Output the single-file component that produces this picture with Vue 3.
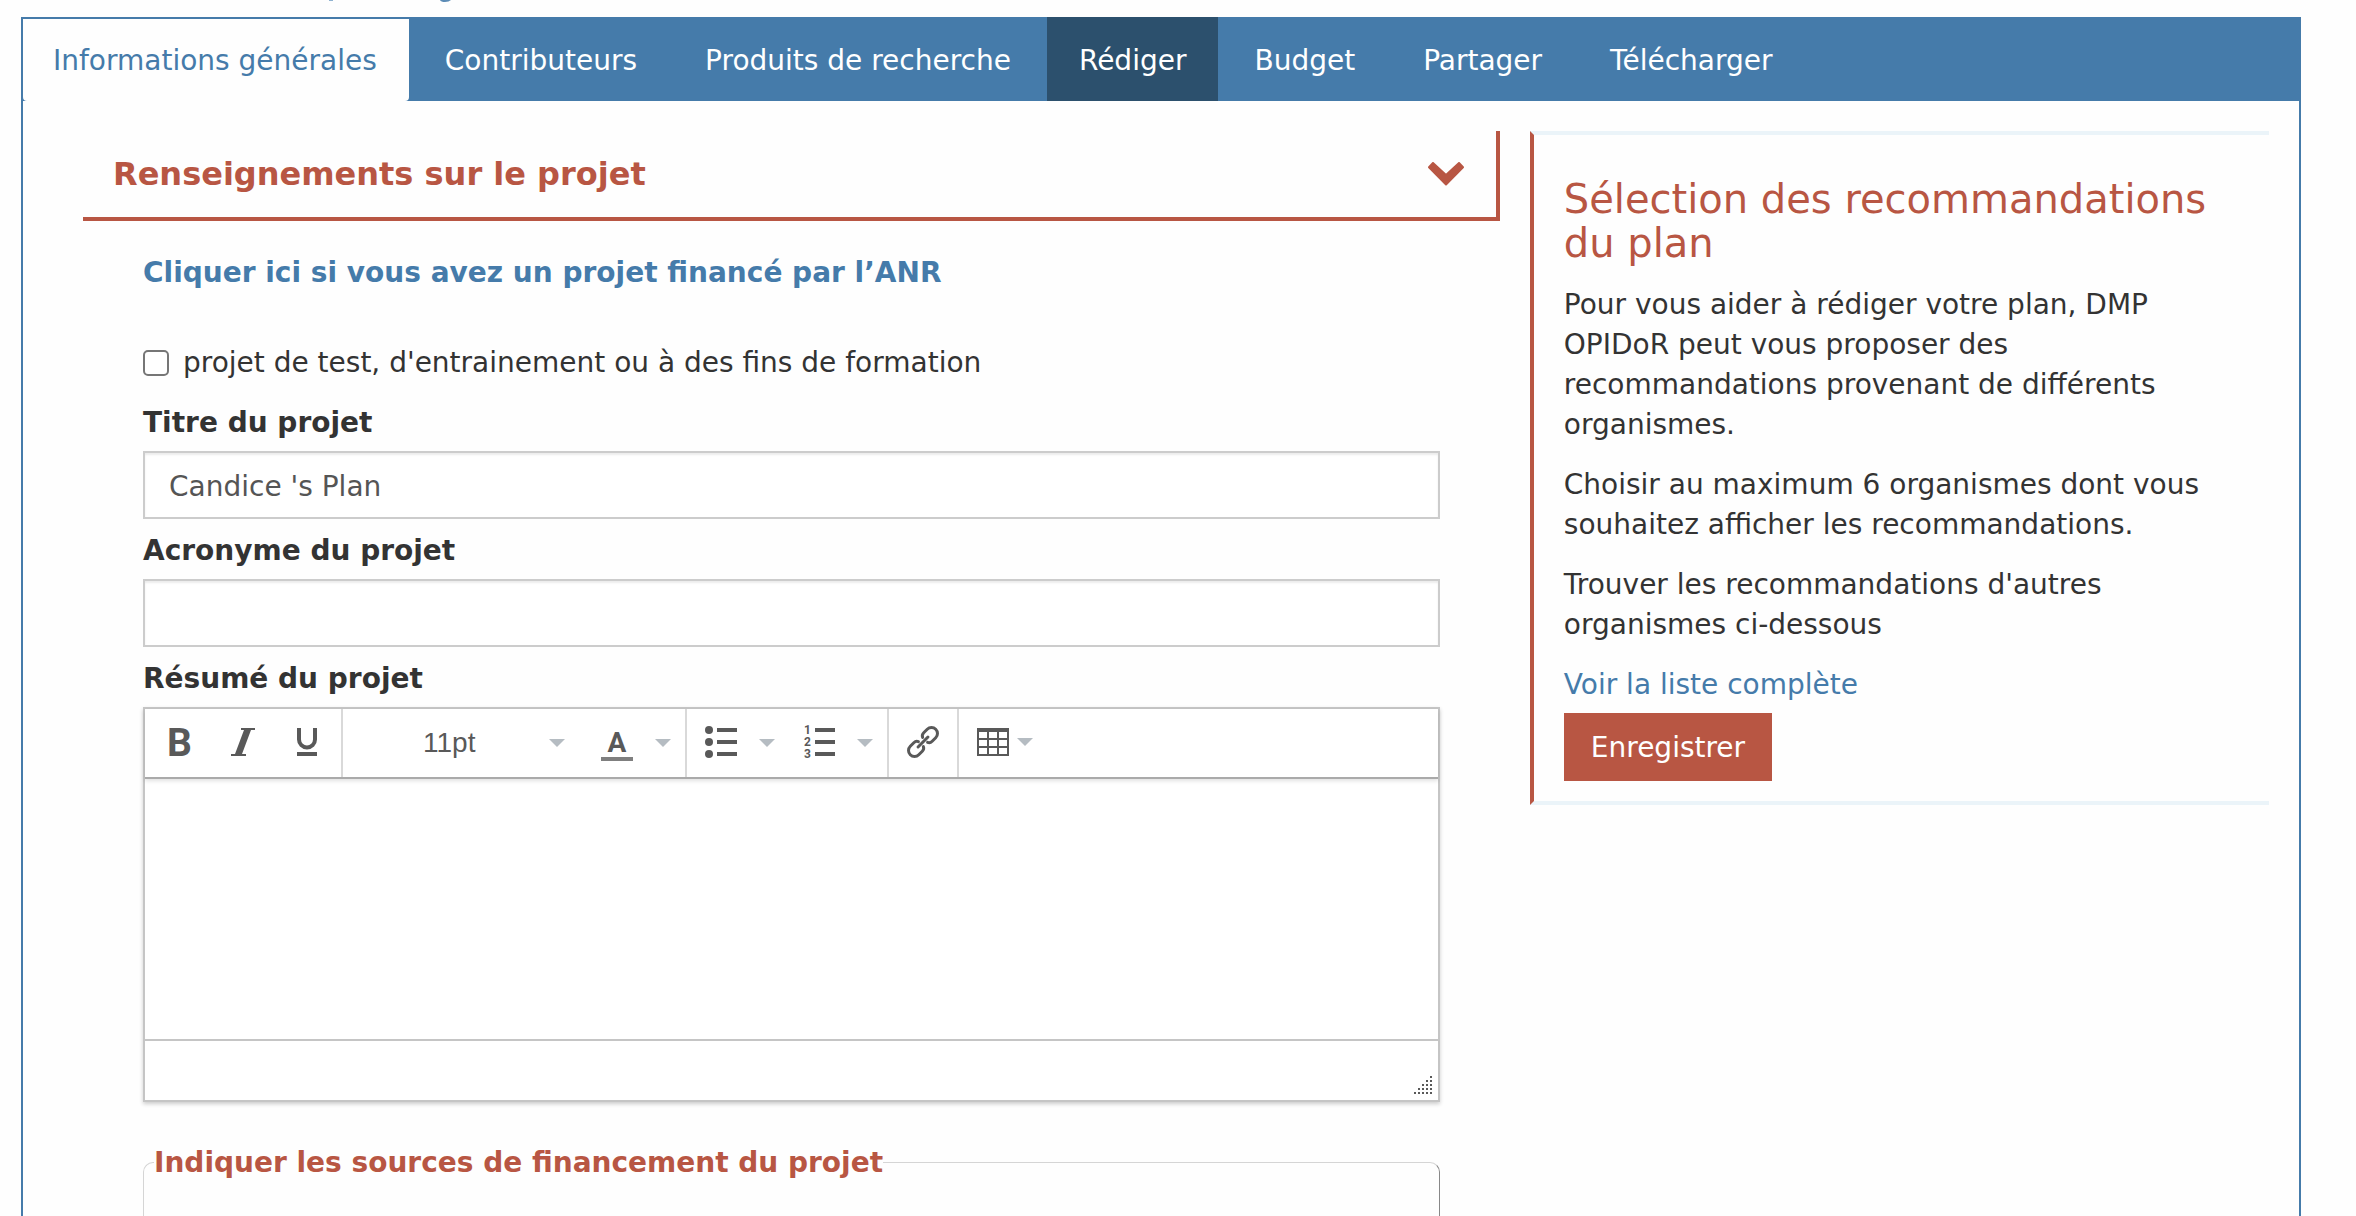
<script setup>
import { ref } from 'vue'

const tabs = [
  { label: 'Informations générales', state: 'active' },
  { label: 'Contributeurs' },
  { label: 'Produits de recherche' },
  { label: 'Rédiger', state: 'hover' },
  { label: 'Budget' },
  { label: 'Partager' },
  { label: 'Télécharger' },
]

const title = ref("Candice 's Plan")
const acronym = ref('')
const summary = ref('')
const isTest = ref(false)
const fontSize = ref('11pt')

// Resize grip: a triangle of dots, five columns wide
const gripDots = []
for (let row = 0; row < 5; row++) {
  for (let col = 4 - row; col < 5; col++) gripDots.push({ x: col * 4, y: row * 4 })
}
</script>

<template>
  <div class="page">
    <header class="title-strip">
      <svg width="460" height="3" viewBox="0 0 460 3" aria-hidden="true">
        <rect x="329" width="4" height="1" fill="#8fb2d0" />
        <path d="M440 0h11q-2 2-6 2t-5-2z" fill="#5c8cb6" />
      </svg>
    </header>

    <nav class="tabs">
      <a v-for="tab in tabs" :key="tab.label" href="#" class="tab" :class="tab.state">{{ tab.label }}</a>
    </nav>

    <main class="panel">
      <section class="project">
        <button type="button" class="section-head">
          <span>Renseignements sur le projet</span>
          <svg width="36" height="24" viewBox="0 0 36 24" aria-hidden="true">
            <path d="M5 1 1 5.300 18 22.500 35 5.300 31 1 18 13z" fill="#b85643" stroke="#b85643" stroke-width="2" stroke-linejoin="round" />
          </svg>
        </button>

        <form class="form" @submit.prevent>
          <a href="#" class="anr-link">Cliquer ici si vous avez un projet financé par l’ANR</a>

          <label class="check">
            <input v-model="isTest" type="checkbox" />
            <span>projet de test, d'entrainement ou à des fins de formation</span>
          </label>

          <label class="field-label" for="title">Titre du projet</label>
          <input id="title" v-model="title" class="text-input" type="text" />

          <label class="field-label" for="acronym">Acronyme du projet</label>
          <input id="acronym" v-model="acronym" class="text-input" type="text" />

          <label class="field-label" for="summary">Résumé du projet</label>
          <div class="editor">
            <div class="toolbar">
              <div class="group">
                <button type="button" class="tool" aria-label="Gras">
                  <svg class="icon" viewBox="0 0 32 32"><text x="4" y="30" font-size="39" font-weight="700">B</text></svg>
                </button>
                <button type="button" class="tool" aria-label="Italique">
                  <svg class="icon" viewBox="0 0 32 32"><path d="M14 2h14v2h-4L15 28h4v2H4v-2h4l9-24h-3z" /></svg>
                </button>
                <button type="button" class="tool" aria-label="Souligné">
                  <svg class="icon" viewBox="0 0 32 32">
                    <path d="M8 2v11.500a8 8 0 0 0 16 0V2" fill="none" stroke="#595959" stroke-width="4" />
                    <path d="M6 26h20v4H6z" />
                  </svg>
                </button>
              </div>
              <div class="group">
                <div class="size-picker">
                  <select v-model="fontSize" aria-label="Taille de police">
                    <option>11pt</option>
                    <option>12pt</option>
                    <option>14pt</option>
                  </select>
                  <svg class="caret" viewBox="0 0 16 8" aria-hidden="true"><path d="M0 0h16L8 8z" /></svg>
                </div>
                <button type="button" class="tool" aria-label="Couleur du texte">
                  <svg class="icon" viewBox="0 0 32 32">
                    <text x="16" y="26" font-size="28" font-weight="700" text-anchor="middle">A</text>
                    <path d="M0 31h32v4H0z" fill="#7f7f7f" />
                  </svg>
                </button>
                <button type="button" class="tool-more" aria-label="Choisir une couleur">
                  <svg class="caret" viewBox="0 0 16 8"><path d="M0 0h16L8 8z" /></svg>
                </button>
              </div>
              <div class="group">
                <button type="button" class="tool" aria-label="Liste à puces">
                  <svg class="icon" viewBox="0 0 32 32">
                    <circle cx="4" cy="4" r="4" /><circle cx="4" cy="16" r="4" /><circle cx="4" cy="28" r="4" />
                    <path d="M12 2h20v4H12zM12 14h20v4H12zM12 26h20v4H12z" />
                  </svg>
                </button>
                <button type="button" class="tool-more" aria-label="Style de puces">
                  <svg class="caret" viewBox="0 0 16 8"><path d="M0 0h16L8 8z" /></svg>
                </button>
                <button type="button" class="tool" aria-label="Liste numérotée">
                  <svg class="icon" viewBox="0 0 32 32">
                    <g font-size="12" font-weight="700">
                      <text x="1" y="8">1</text><text x="1" y="20">2</text><text x="1" y="32">3</text>
                    </g>
                    <path d="M12 2h20v4H12zM12 14h20v4H12zM12 26h20v4H12z" />
                  </svg>
                </button>
                <button type="button" class="tool-more" aria-label="Style de numérotation">
                  <svg class="caret" viewBox="0 0 16 8"><path d="M0 0h16L8 8z" /></svg>
                </button>
              </div>
              <div class="group">
                <button type="button" class="tool" aria-label="Lien">
                  <svg class="icon" viewBox="0 0 32 32">
                    <g transform="translate(16 16) rotate(-45)" fill="none" stroke="#595959" stroke-width="3" stroke-linecap="round">
                      <path d="M3 -3.500Q4 -6 7 -6H12a6 6 0 0 1 0 12H7Q4 6 3 3.500" />
                      <path d="M-3 -3.500Q-4 -6 -7 -6H-12a6 6 0 0 0 0 12H-7Q-4 6 -3 3.500" />
                      <path d="M-7 0H7" />
                    </g>
                  </svg>
                </button>
              </div>
              <div class="group last">
                <button type="button" class="tool-menu" aria-label="Tableau">
                  <svg class="icon" viewBox="0 0 32 32">
                    <path fill-rule="evenodd" d="M0 2h32v28H0zM2 6v6h8V6zM12 6v6h8V6zM22 6v6h8V6zM2 14v6h8v-6zM12 14v6h8v-6zM22 14v6h8v-6zM2 22v6h8v-6zM12 22v6h8v-6zM22 22v6h8v-6z" />
                  </svg>
                  <svg class="caret" viewBox="0 0 16 8"><path d="M0 0h16L8 8z" /></svg>
                </button>
              </div>
            </div>
            <textarea id="summary" v-model="summary" class="edit-area"></textarea>
            <div class="statusbar">
              <svg width="18" height="18" viewBox="0 0 18 18" aria-hidden="true">
                <rect v-for="(dot, i) in gripDots" :key="i" :x="dot.x" :y="dot.y" width="2" height="2" fill="#595959" />
              </svg>
            </div>
          </div>

          <fieldset class="funding">
            <legend>Indiquer les sources de financement du projet</legend>
          </fieldset>
        </form>
      </section>

      <aside class="guidance">
        <h2>Sélection des recommandations du plan</h2>
        <p>Pour vous aider à rédiger votre plan, DMP OPIDoR peut vous proposer des recommandations provenant de différents organismes.</p>
        <p>Choisir au maximum 6 organismes dont vous souhaitez afficher les recommandations.</p>
        <p>Trouver les recommandations d'autres organismes ci-dessous</p>
        <a href="#" class="full-list">Voir la liste complète</a>
        <button type="button" class="save">Enregistrer</button>
      </aside>
    </main>
  </div>
</template>

<style>
body {
  margin: 0;
  background: #fefefe;
}
</style>

<style scoped>
.page {
  --blue: #457baa;
  --red: #b85643;
  display: flex;
  flex-direction: column;
  box-sizing: border-box;
  height: 100vh;
  overflow: hidden;
  padding: 0 55px 0 21px;
  font-family: Verdana, 'DejaVu Sans', sans-serif;
  font-size: 28px;
  line-height: 40px;
  color: #333;
}

.page *,
.page *::before {
  box-sizing: border-box;
}

button,
input,
select,
textarea {
  margin: 0;
  font: inherit;
  color: inherit;
}

button {
  border: 0;
  background: none;
  cursor: pointer;
}

svg {
  display: block;
  flex: none;
}

a {
  color: var(--blue);
  text-decoration: none;
}

.title-strip {
  flex: none;
  height: 17px;
  margin-left: -21px;
}

.tabs {
  display: flex;
  flex: none;
  gap: 4px;
  padding: 0 2px;
  background: var(--blue);
}

.tab {
  padding: 24px 32px 20px;
  color: #fff;
  white-space: nowrap;
}

.tab.active {
  padding-top: 22px;
  padding-left: 30px;
  border-top: 2px solid var(--blue);
  border-radius: 0 0 4px 4px;
  background: #fefefe;
  color: var(--blue);
}

.tab.hover {
  background: #2c506d;
}

.panel {
  display: grid;
  flex: 1;
  grid-template-columns: minmax(0, 23fr) minmax(0, 12fr);
  align-items: start;
  gap: 30px;
  min-height: 0;
  padding: 30px 30px 0 60px;
  border: solid var(--blue);
  border-width: 0 2px;
}

.section-head {
  display: flex;
  align-items: center;
  justify-content: space-between;
  width: 100%;
  padding: 21px 32px 21px 30px;
  border: solid var(--red);
  border-width: 0 4px 4px 0;
  font-size: 32px;
  line-height: 44px;
  font-weight: 700;
  color: var(--red);
  text-align: left;
}

.form {
  display: flex;
  flex-direction: column;
  padding: 32px 60px 0;
}

.anr-link {
  align-self: flex-start;
  font-weight: 700;
}

.check {
  display: flex;
  align-items: center;
  align-self: flex-start;
  gap: 14px;
  margin: 50px 0 10px;
}

.check input {
  appearance: none;
  width: 26px;
  height: 26px;
  border: 2px solid #767676;
  border-radius: 5px;
  background: #fff;
}

.check input:checked {
  background: var(--blue);
}

.field-label {
  margin: 12px 0 8px;
  font-weight: 700;
}

.check + .field-label {
  margin-top: 10px;
}

.text-input {
  height: 68px;
  padding: 2px 24px 0;
  border: 2px solid #ccc;
  border-radius: 0;
  background: #fff;
  box-shadow: inset 0 2px 2px rgba(0, 0, 0, 0.08);
  color: #555;
}

.editor {
  display: flex;
  flex-direction: column;
  border: 2px solid #c5c5c5;
  background: #fff;
  box-shadow: 0 2px 4px rgba(0, 0, 0, 0.2);
}

.toolbar {
  display: flex;
  height: 70px;
  border-bottom: 2px solid #aaa;
  box-shadow: 0 2px 4px rgba(0, 0, 0, 0.12);
  font-family: 'Liberation Sans', Arial, sans-serif;
  color: #595959;
}

.group {
  display: flex;
  padding: 0 2px;
  border-right: 2px solid #d9d9d9;
}

.group.last {
  border-right: 0;
}

.tool,
.tool-more,
.tool-menu {
  display: flex;
  align-items: center;
  padding: 0 16px 2px;
}

.tool-more {
  padding: 0 12px 0 6px;
}

.tool-menu {
  gap: 8px;
}

.icon {
  width: 32px;
  height: 32px;
  overflow: visible;
  fill: #595959;
  font-family: Roboto, sans-serif;
}

.caret {
  width: 16px;
  height: 8px;
  fill: #b5bcc2;
}

.size-picker {
  display: grid;
  width: 240px;
}

.size-picker > * {
  grid-area: 1 / 1;
}

.size-picker select {
  appearance: none;
  padding: 0 40px 0 78px;
  border: 0;
  background: none;
}

.size-picker .caret {
  align-self: center;
  justify-self: end;
  margin-right: 20px;
  pointer-events: none;
}

.edit-area {
  height: 260px;
  padding: 16px;
  border: 0;
  background: none;
  resize: none;
}

.statusbar {
  display: flex;
  align-items: flex-end;
  justify-content: flex-end;
  height: 61px;
  padding: 6px;
  border-top: 2px solid #c5c5c5;
}

.funding {
  min-width: 0;
  min-height: 240px;
  margin: 40px 0 0;
  padding: 0 10px;
  border: 1px solid #d5d5d5;
  border-right-color: #888;
  border-radius: 10px;
}

.funding legend {
  padding: 2px 0 0;
  line-height: 38px;
  font-weight: 700;
  color: var(--red);
}

.guidance {
  display: flex;
  flex-direction: column;
  align-items: flex-start;
  padding: 42px 30px 20px;
  border: 4px solid #ebf4f9;
  border-right: 0;
  border-left-color: var(--red);
}

.guidance h2 {
  margin: 0 0 20px;
  font-size: 40px;
  line-height: 44px;
  font-weight: 400;
  color: var(--red);
}

.guidance p {
  margin: 0 0 20px;
}

.save {
  height: 68px;
  margin-top: 8px;
  padding: 2px 27px 0;
  background: var(--red);
  color: #fff;
}
</style>
